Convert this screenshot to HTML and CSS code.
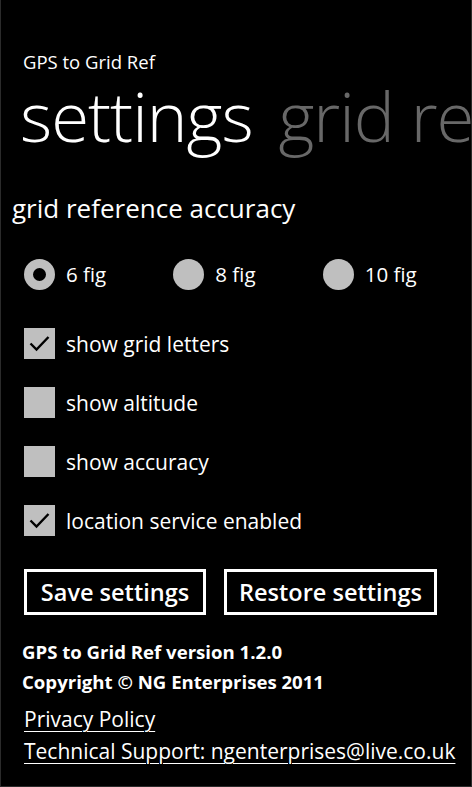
FILE: index.html
```html
<!DOCTYPE html>
<html>
<head>
<meta charset="utf-8">
<link rel="stylesheet" href="styles.css">
</head>
<body>
<div class="page">
  <div class="app-title">GPS to Grid Ref</div>
  <div class="pivot">
    <span class="pivot-item active">settings</span>
    <span class="pivot-item">grid reference</span>
  </div>
  <div class="content">
    <div class="section-title">grid reference accuracy</div>
    <div class="radios">
      <div class="radio checked"><span class="dot"></span><span class="label">6 fig</span></div>
      <div class="radio"><span class="dot"></span><span class="label">8 fig</span></div>
      <div class="radio"><span class="dot"></span><span class="label">10 fig</span></div>
    </div>
    <div class="checks">
      <div class="check"><span class="box"><svg viewBox="0 0 31 31" width="31" height="31"><path d="M6.5 15.5 L12.5 21.5 L24.5 9" fill="none" stroke="#000" stroke-width="2.4"/></svg></span><span class="label">show grid letters</span></div>
      <div class="check"><span class="box"></span><span class="label">show altitude</span></div>
      <div class="check"><span class="box"></span><span class="label">show accuracy</span></div>
      <div class="check"><span class="box"><svg viewBox="0 0 31 31" width="31" height="31"><path d="M6.5 15.5 L12.5 21.5 L24.5 9" fill="none" stroke="#000" stroke-width="2.4"/></svg></span><span class="label">location service enabled</span></div>
    </div>
    <div class="buttons">
      <div class="btn save">Save settings</div>
      <div class="btn restore">Restore settings</div>
    </div>
    <div class="info first">GPS to Grid Ref version 1.2.0</div>
    <div class="info">Copyright © NG Enterprises 2011</div>
    <div class="link first">Privacy Policy</div>
    <div class="link">Technical Support: ngenterprises@live.co.uk</div>
  </div>
</div>
</body>
</html>
```
FILE: styles.css
```css
html, body {
  margin: 0;
  padding: 0;
  background: #000;
}
body {
  width: 472px;
  height: 787px;
  box-sizing: border-box;
  box-shadow: inset 1px 0 #2b2b2b, inset -1px 0 #2b2b2b, inset 0 -1px #2b2b2b;
  overflow: hidden;
  color: #fff;
  font-family: "Open Sans", "Noto Sans", sans-serif;
}
.page {
  display: flex;
  flex-direction: column;
}
.app-title {
  font-size: 18.5px;
  line-height: 18px;
  margin: 53px 0 0 23px;
}
.pivot {
  white-space: nowrap;
  overflow: hidden;
  font-size: 69px;
  font-weight: 300;
  line-height: 88px;
  margin: 0 0 0 20px;
  letter-spacing: -1px;
}
.pivot-item {
  margin-right: 9px;
  color: #686868;
}
.pivot-item.active {
  color: #fff;
}
.content {
  display: flex;
  flex-direction: column;
  padding: 0 0 0 12px;
}
.section-title {
  font-size: 26px;
  line-height: 34px;
  margin-top: 32px;
}
.radios {
  display: flex;
  margin: 33.5px 0 0 12px;
}
.radio {
  display: flex;
  align-items: center;
  gap: 11px;
  width: 150px;
  font-size: 20.5px;
}
.dot {
  width: 31px;
  height: 31px;
  border-radius: 50%;
  background: #bfbfbf;
  box-sizing: border-box;
}
.radio.checked .dot {
  background: #000;
  border: 9.5px solid #bfbfbf;
}
.checks {
  display: flex;
  flex-direction: column;
  gap: 28px;
  margin: 38.5px 0 0 12px;
}
.check {
  display: flex;
  align-items: center;
  gap: 11px;
  font-size: 21px;
  height: 31px;
}
.box {
  width: 31px;
  height: 31px;
  background: #bfbfbf;
  display: block;
}
.box svg {
  display: block;
}
.buttons {
  display: flex;
  gap: 18px;
  margin: 33px 0 0 12px;
}
.btn {
  border: 3px solid #fff;
  height: 46px;
  box-sizing: border-box;
  display: flex;
  align-items: center;
  justify-content: center;
  font-size: 23.5px;
  font-weight: 600;
}
.btn.save {
  width: 182px;
}
.btn.restore {
  width: 213px;
}
.info {
  font-size: 18.6px;
  font-weight: 700;
  line-height: 30px;
  margin-left: 10px;
}
.info.first {
  margin-top: 22px;
}
.link {
  font-size: 21px;
  line-height: 32px;
  margin-left: 12px;
  text-decoration: underline;
  text-underline-offset: 4px;
  text-decoration-thickness: 1px;
}
.link.first {
  margin-top: 6px;
}
```
